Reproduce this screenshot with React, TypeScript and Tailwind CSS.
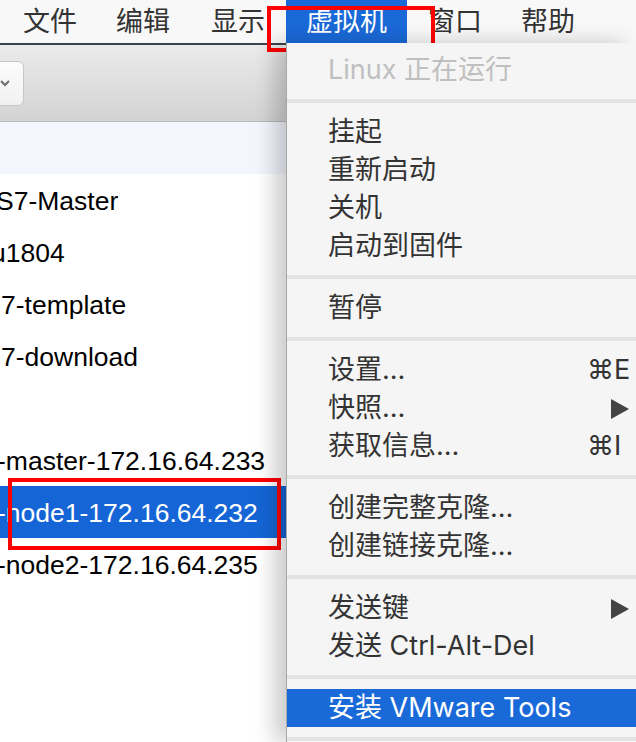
const menuBar = [
  { label: '文件', ml: 'ml-[3px]' },
  { label: '编辑', ml: 'ml-[-1px]' },
  { label: '显示', ml: 'ml-[1px]' },
  { label: '虚拟机', ml: 'ml-[1px]', active: true },
  { label: '窗口', ml: 'ml-[1px]' },
  { label: '帮助', ml: 'ml-[-1px]' },
];

const vms = [
  { name: '', ml: '', tint: true },
  { name: 'S7-Master', ml: 'ml-[-4px]' },
  { name: 'u1804', ml: 'ml-[-9px]' },
  { name: '7-template', ml: 'ml-[1px]' },
  { name: '7-download', ml: 'ml-[1px]' },
  { name: '', ml: '' },
  { name: '-master-172.16.64.233', ml: 'ml-[-3px]' },
  { name: '-node1-172.16.64.232', ml: 'ml-[-3px]', selected: true },
  { name: '-node2-172.16.64.235', ml: 'ml-[-3px]' },
  { name: '', ml: '' },
  { name: '', ml: '' },
];

type Item = { label: string; shortcut?: string; submenu?: boolean; disabled?: boolean; highlight?: boolean };

const groups: Item[][] = [
  [{ label: 'Linux 正在运行', disabled: true }],
  [{ label: '挂起' }, { label: '重新启动' }, { label: '关机' }, { label: '启动到固件' }],
  [{ label: '暂停' }],
  [{ label: '设置…', shortcut: '⌘E' }, { label: '快照…', submenu: true }, { label: '获取信息…', shortcut: '⌘I' }],
  [{ label: '创建完整克隆…' }, { label: '创建链接克隆…' }],
  [{ label: '发送键', submenu: true }, { label: '发送 Ctrl-Alt-Del' }],
  [{ label: '安装 VMware Tools', highlight: true }],
];

function Arrow() {
  return (
    <svg width="18" height="20" viewBox="0 0 18 20">
      <polygon points="0,0 18,10 0,20" fill="#444" />
    </svg>
  );
}

function MenuRow({ item }: { item: Item }) {
  const color = item.highlight ? 'bg-[#1a69d8] text-white' : item.disabled ? 'text-[#bfbfbf]' : 'text-[#333]';
  return (
    <div className={`flex h-[38px] items-center pl-[41px] pt-[1px] ${color}`}>
      <span className="flex-1 whitespace-nowrap">{item.label}</span>
      <span className="flex w-[49px] items-center pr-[7px]">
        {item.shortcut && <span>{item.shortcut}</span>}
        {item.submenu && (
          <span className="ml-auto flex">
            <Arrow />
          </span>
        )}
      </span>
    </div>
  );
}

export default function App() {
  return (
    <div className="relative h-[742px] w-[636px] overflow-hidden bg-white font-['Inter','Noto_Sans_CJK_SC',sans-serif] text-[27px]">
      {/* menu bar */}
      <div className="flex h-[43px] items-stretch bg-[#f8f8f8] text-[#333]">
        {menuBar.map((m) => (
          <div
            key={m.label}
            className={`flex items-center px-[20px] pt-[2px] ${m.ml} ${m.active ? 'bg-[#1a69d8] text-white' : ''}`}
          >
            {m.label}
          </div>
        ))}
      </div>

      <div className="flex h-[699px]">
        {/* window behind */}
        <div className="flex w-[286px] shrink-0 flex-col overflow-hidden border-t-2 border-[#3d434a]">
          <div className="flex h-[77px] items-center border-b border-[#b9b9b9] bg-gradient-to-b from-[#ebebeb] to-[#d3d3d3]">
            <div className="ml-[-14px] flex h-[45px] w-[38px] items-center justify-end rounded-[6px] border border-[#c6c6c6] bg-gradient-to-b from-[#fcfcfc] to-[#f1f1f1] pr-[13px]">
              <svg width="10" height="8" viewBox="0 0 10 8">
                <path d="M1 2 L5 6 L9 2" stroke="#6e6e6e" strokeWidth="2" fill="none" />
              </svg>
            </div>
          </div>
          <div className="flex-1 bg-white font-['Liberation_Sans',sans-serif] text-[26.5px]">
            {vms.map((vm, i) => (
              <div
                key={i}
                className={`flex h-[52px] items-center whitespace-nowrap pt-[3px] ${
                  vm.selected ? 'bg-[#1565d6] text-white' : vm.tint ? 'bg-[#f3f6fd]' : 'text-black'
                }`}
              >
                <span className={vm.ml}>{vm.name}</span>
              </div>
            ))}
          </div>
        </div>

        {/* dropdown menu */}
        <div className="relative z-10 flex-1 border-l border-[#a8a8a8] bg-[#f5f5f5] pt-[8px] shadow-[-12px_0_20px_rgba(0,0,0,0.2)]">
          {groups.map((g, gi) => (
            <div key={gi}>
              {gi > 0 && (
                <div className="py-[10px]">
                  <div className="h-[4px] bg-[#e3e3e3]" />
                </div>
              )}
              {g.map((item) => (
                <MenuRow key={item.label} item={item} />
              ))}
            </div>
          ))}
          <div className="py-[10px]">
            <div className="h-[4px] bg-[#e3e3e3]" />
          </div>
        </div>
      </div>

      {/* red annotation boxes */}
      <div className="absolute left-[267px] top-[6px] h-[46px] w-[168px] border-4 border-[#ff0000]" />
      <div className="absolute left-[8px] top-[478px] h-[72px] w-[273px] border-4 border-[#ff0000]" />
      <div className="absolute left-[296px] top-[678px] h-[53px] w-[319px] border-4 border-[#ff0000]" />
    </div>
  );
}
